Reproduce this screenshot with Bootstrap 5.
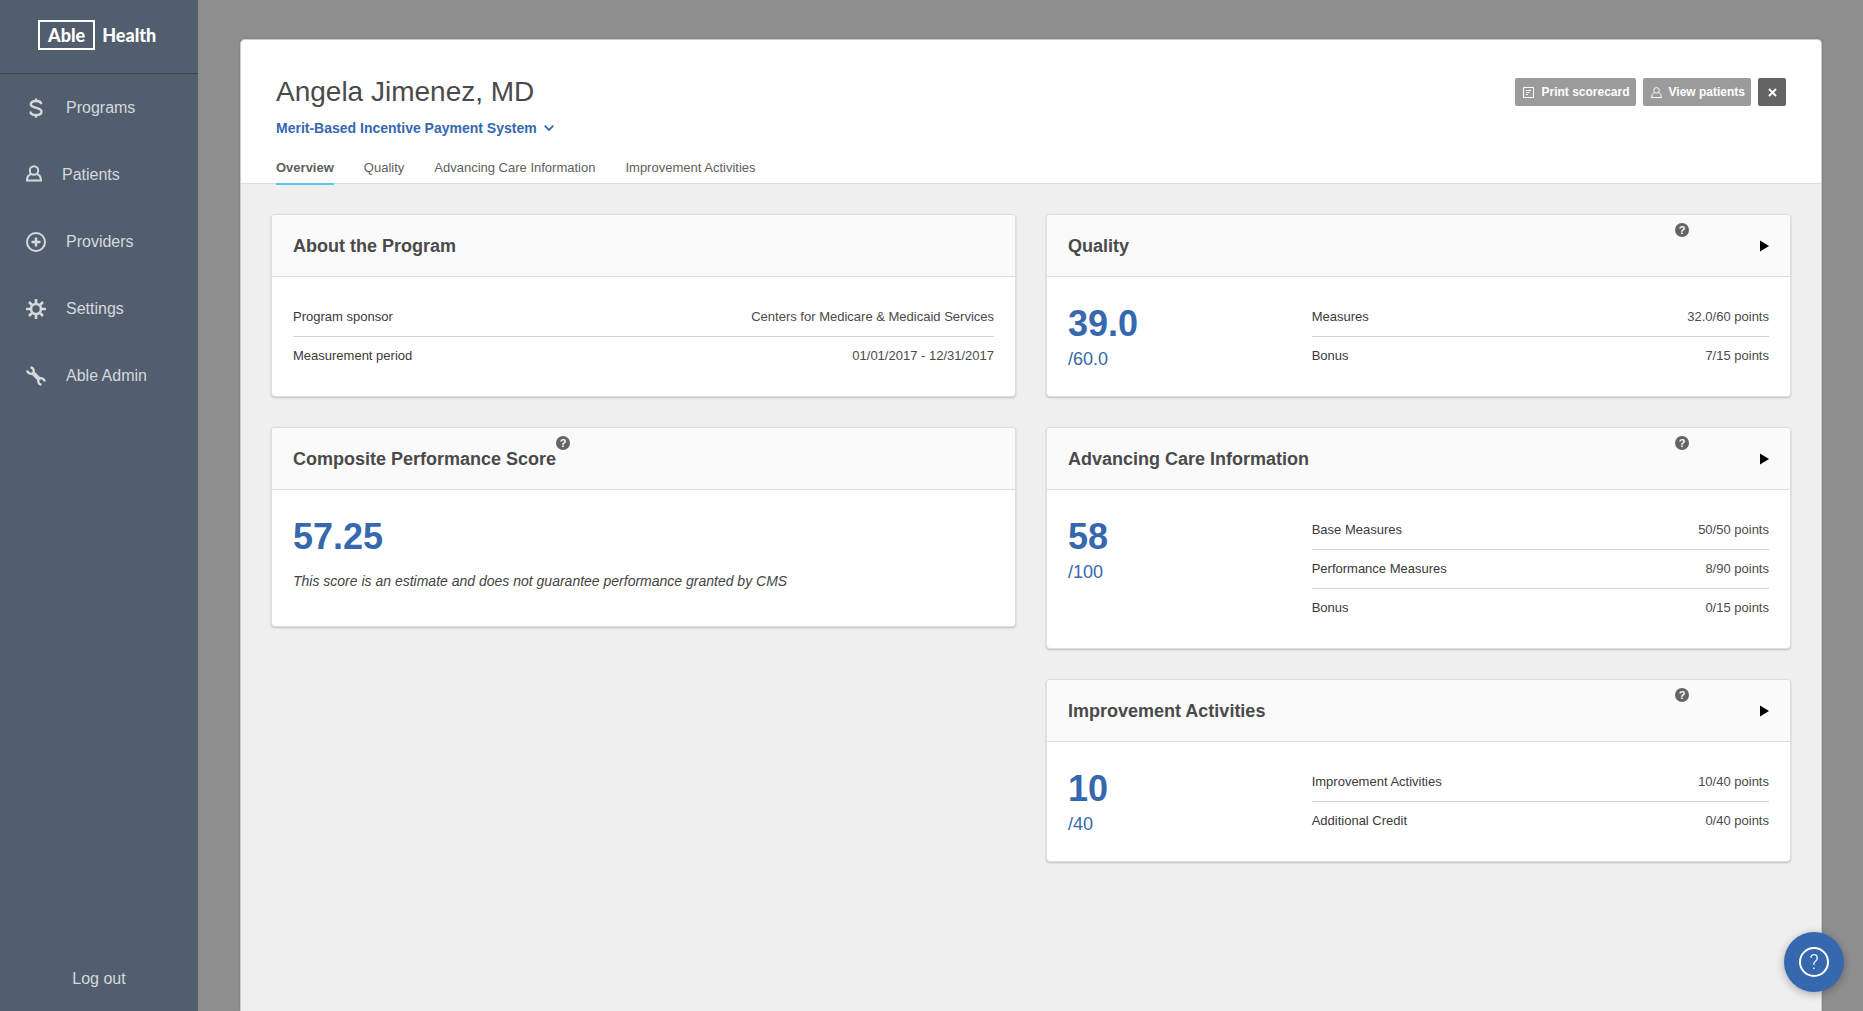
<!DOCTYPE html>
<html lang="en">
<head>
<meta charset="utf-8">
<meta name="viewport" content="width=device-width, initial-scale=1">
<title>Able Health - Provider scorecard</title>
<link href="https://cdn.jsdelivr.net/npm/bootstrap@5.3.0/dist/css/bootstrap.min.css" rel="stylesheet">
<style>
body { font-family: "Liberation Sans", Arial, sans-serif; font-size: 13px; line-height: 20px; color: #4a4a4a; background: #8e8e8e; }
button { font-family: inherit; }
svg { flex: none; display: block; }

.side-rail { width: 198px; background: #525e6e; flex: none; }
.brand-bar { height: 74px; padding: 0 38px 4px; border-bottom: 1px solid #3b4550; }
.brand-link { font: 900 18px/20px Lato, "Open Sans", sans-serif; color: #fff; gap: 7px; }
.brand-box { border: 2px solid #fff; padding: 3px 8px; }
.side-rail .nav-link { height: 67px; padding: 0 26px; gap: 20px; font-size: 16px; color: #d5d9de; }
.side-rail .nav-link:hover { color: #fff; }
.log-out { font-size: 16px; line-height: 24px; color: #d5d9de; padding-bottom: 20px; }

.page-area { padding: 39px 41px 0 42px; min-width: 0; }
.sheet { background: #efefef; border: 1px solid #ccc; border-bottom: 0; border-radius: 5px 5px 0 0; box-shadow: 0 0 2px rgba(0,0,0,.2); }
.sheet-head { background: #fff; border-bottom: 1px solid #ddd; border-radius: 4px 4px 0 0; padding: 34px 35px 0; }
.sheet-head h1 { font-size: 28px; line-height: 36px; margin: 0 0 8px; }
.program-pick { font-size: 14px; line-height: 20px; font-weight: 700; color: #3568ae; background: none; border: 0; padding: 0; gap: 7px; }
.sheet-tabs { gap: 30px; margin: 20px 0 -2px; }
.sheet-tabs .nav-link { padding: 0 0 5px; border-bottom: 2px solid transparent; color: #606060; }
.sheet-tabs .nav-link.active { font-weight: 700; border-color: #5bc5ea; }
.tool-row { gap: 7px; }
.tool-btn { height: 28px; padding: 0 6px 0 8px; gap: 7px; border: 0; border-radius: 2px; background: #9b9b9b; color: #fff; font-size: 12px; font-weight: 700; }
.tool-close { width: 28px; padding: 0; background: #646464; }

.sheet-body { padding: 30px; }
.sheet-body > .row { --bs-gutter-x: 30px; --bs-gutter-y: 30px; }
.stack { gap: 30px; }
.score-card { --bs-card-border-color: #ddd; --bs-card-border-radius: 4px; --bs-card-inner-border-radius: 3px; box-shadow: 0 1px 2px rgba(0,0,0,.2); color: inherit; }
.score-card .card-header { height: 62px; padding: 0 21px; background: #fafafa; border-color: #ddd; }
.score-card .card-body { padding: 21px 21px 20px; }
.score-card .card-body > .row { --bs-gutter-x: 30px; }
.score-card h2 { font-size: 18px; line-height: 24px; font-weight: 700; margin: 0; }
.help-dot { width: 14px; height: 14px; margin-top: 8px; padding: 0; border: 0; border-radius: 50%; background: #646464; color: #fafafa; font-size: 11px; line-height: 14px; font-weight: 700; text-align: center; }
.open-card { margin-left: 71px; padding: 0; border: 0; background: none; }
.big-score { font-size: 36px; line-height: 52px; font-weight: 700; color: #3568ae; }
.out-of { font-size: 18px; line-height: 18px; color: #3568ae; }
.estimate-note { font-size: 14px; line-height: 22px; font-style: italic; margin: 7px 0 14px; color: #444; }
.fact-list { margin: 0; }
.fact-list > div { height: 39px; border-bottom: 1px solid #d3d3d3; }
.fact-list > div:last-child { border-color: transparent; }
.fact-list dt { font-weight: 400; color: #3a3a3a; }
.fact-list dd { margin: 0; }

.help-fab { right: 19px; bottom: 19px; width: 60px; height: 60px; padding: 0; border: 0; border-radius: 50%; background: #3568ae; box-shadow: 0 2px 8px rgba(0,0,0,.3); }
.help-ring { width: 30px; height: 30px; border: 2px solid #fff; border-radius: 50%; color: #fff; font: 300 20px/26px Roboto, sans-serif; }
</style>
<script src="https://cdn.jsdelivr.net/npm/bootstrap@5.3.0/dist/js/bootstrap.bundle.min.js" defer></script>
</head>
<body>
<div class="d-flex min-vh-100">
  <aside class="side-rail d-flex flex-column">
    <div class="brand-bar d-flex align-items-center">
      <a class="brand-link d-flex align-items-center text-decoration-none" href="#"><span class="brand-box">Able</span><span>Health</span></a>
    </div>
    <nav class="nav flex-column" aria-label="Main">
      <a class="nav-link d-flex align-items-center" href="#">
        <svg width="20" height="20" viewBox="0 0 20 20" fill="none" stroke="currentColor" stroke-width="2.400"><path d="M15.200 6.200C15.200 4 13 3 10 3S4.800 4 4.800 6.300C4.800 11 15.500 8.600 15.500 13.500C15.500 16 13 17 10 17S4.500 16 4.500 13.400M10 .4V3.500M10 16.500V19.700"/></svg>Programs</a>
      <a class="nav-link d-flex align-items-center" href="#">
        <svg width="16" height="20" viewBox="0 0 16 20" fill="none" stroke="currentColor" stroke-width="2"><circle cx="8" cy="5.500" r="4.200"/><path d="M5 9C2.500 10 1 12 1 15.500H15C15 12 13.500 10 11 9"/></svg>Patients</a>
      <a class="nav-link d-flex align-items-center" href="#">
        <svg width="20" height="20" viewBox="0 0 20 20" fill="none" stroke="currentColor" stroke-width="2"><circle cx="10" cy="10" r="9"/><path d="M10 5.500V14.500M5.500 10H14.500" stroke-width="2.400"/></svg>Providers</a>
      <a class="nav-link d-flex align-items-center" href="#">
        <svg width="20" height="20" viewBox="0 0 20 20" fill="none" stroke="currentColor" stroke-width="2.600"><circle cx="10" cy="10" r="5"/><path d="M10 0V5M10 15V20M0 10H5M15 10H20M3 3L6.500 6.500M13.500 13.500L17 17M3 17L6.500 13.500M13.500 6.500L17 3"/></svg>Settings</a>
      <a class="nav-link d-flex align-items-center" href="#">
        <svg width="20" height="20" viewBox="0 0 20 20" fill="none" stroke="currentColor"><path d="M6.500 6.500L13.500 13.500" stroke-width="4"/><path d="M4.500 1.200C7.400 1.600 8.600 4.600 7.200 7.200C4.600 8.600 1.600 7.400 1.200 4.500M15.500 18.800C12.600 18.400 11.400 15.400 12.800 12.800C15.400 11.400 18.400 12.600 18.800 15.500" stroke-width="2.400"/></svg>Able Admin</a>
    </nav>
    <a class="log-out mt-auto text-center text-decoration-none" href="#">Log out</a>
  </aside>

  <main class="page-area flex-grow-1 d-flex flex-column">
    <div class="sheet flex-grow-1">
      <header class="sheet-head">
        <div class="d-flex justify-content-between align-items-start">
          <div>
            <h1>Angela Jimenez, MD</h1>
            <button class="program-pick d-flex align-items-center" type="button">Merit-Based Incentive Payment System
              <svg width="10" height="6" viewBox="0 0 10 6" fill="none" stroke="currentColor" stroke-width="1.800"><path d="M.7.700L5 5L9.300.7"/></svg></button>
          </div>
          <div class="tool-row d-flex mt-1">
            <button class="tool-btn d-flex align-items-center" type="button">
              <svg width="11" height="11" viewBox="0 0 11 11" fill="none" stroke="currentColor"><path d="M.5.500H10.500V10.500H.5ZM3 3.500H8M3 5.500H6.500M3 7.500H5"/></svg>Print scorecard</button>
            <button class="tool-btn d-flex align-items-center" type="button">
              <svg width="11" height="11" viewBox="0 0 11 11" fill="none" stroke="currentColor"><circle cx="5.500" cy="3.400" r="2.800"/><path d="M3.400 5.600C1.500 6.400.6 8 .6 10.500H10.400C10.400 8 9.500 6.400 7.600 5.600"/></svg>View patients</button>
            <button class="tool-btn tool-close d-flex align-items-center justify-content-center" type="button" aria-label="Close">
              <svg width="9" height="9" viewBox="0 0 9 9" fill="none" stroke="currentColor" stroke-width="2"><path d="M1 1L8 8M8 1L1 8"/></svg></button>
          </div>
        </div>
        <nav class="sheet-tabs nav" aria-label="Scorecard sections">
          <a class="nav-link active" aria-current="page" href="#">Overview</a>
          <a class="nav-link" href="#">Quality</a>
          <a class="nav-link" href="#">Advancing Care Information</a>
          <a class="nav-link" href="#">Improvement Activities</a>
        </nav>
      </header>

      <div class="sheet-body">
        <div class="row">
          <div class="col-12 col-lg-6">
            <div class="stack d-flex flex-column">
              <section class="score-card card">
                <div class="card-header d-flex align-items-center"><h2>About the Program</h2></div>
                <div class="card-body">
                  <dl class="fact-list">
                    <div class="d-flex justify-content-between align-items-center"><dt>Program sponsor</dt><dd>Centers for Medicare &amp; Medicaid Services</dd></div>
                    <div class="d-flex justify-content-between align-items-center"><dt>Measurement period</dt><dd>01/01/2017 - 12/31/2017</dd></div>
                  </dl>
                </div>
              </section>
              <section class="score-card card">
                <div class="card-header d-flex align-items-center"><h2>Composite Performance Score</h2><button class="help-dot align-self-start" type="button">?</button></div>
                <div class="card-body">
                  <div class="big-score">57.25</div>
                  <p class="estimate-note">This score is an estimate and does not guarantee performance granted by CMS</p>
                </div>
              </section>
            </div>
          </div>

          <div class="col-12 col-lg-6">
            <div class="stack d-flex flex-column">
              <section class="score-card card">
                <div class="card-header d-flex align-items-center"><h2 class="flex-grow-1">Quality</h2><button class="help-dot align-self-start" type="button">?</button>
                  <button class="open-card" type="button" aria-label="Open Quality"><svg width="9" height="12" viewBox="0 0 9 12"><path d="M0 .5L9 6L0 11.500Z"/></svg></button></div>
                <div class="card-body">
                  <div class="row">
                    <div class="col-4"><div class="big-score">39.0</div><div class="out-of">/60.0</div></div>
                    <div class="col-8">
                      <dl class="fact-list">
                        <div class="d-flex justify-content-between align-items-center"><dt>Measures</dt><dd>32.0/60 points</dd></div>
                        <div class="d-flex justify-content-between align-items-center"><dt>Bonus</dt><dd>7/15 points</dd></div>
                      </dl>
                    </div>
                  </div>
                </div>
              </section>
              <section class="score-card card">
                <div class="card-header d-flex align-items-center"><h2 class="flex-grow-1">Advancing Care Information</h2><button class="help-dot align-self-start" type="button">?</button>
                  <button class="open-card" type="button" aria-label="Open Advancing Care Information"><svg width="9" height="12" viewBox="0 0 9 12"><path d="M0 .5L9 6L0 11.500Z"/></svg></button></div>
                <div class="card-body">
                  <div class="row">
                    <div class="col-4"><div class="big-score">58</div><div class="out-of">/100</div></div>
                    <div class="col-8">
                      <dl class="fact-list">
                        <div class="d-flex justify-content-between align-items-center"><dt>Base Measures</dt><dd>50/50 points</dd></div>
                        <div class="d-flex justify-content-between align-items-center"><dt>Performance Measures</dt><dd>8/90 points</dd></div>
                        <div class="d-flex justify-content-between align-items-center"><dt>Bonus</dt><dd>0/15 points</dd></div>
                      </dl>
                    </div>
                  </div>
                </div>
              </section>
              <section class="score-card card">
                <div class="card-header d-flex align-items-center"><h2 class="flex-grow-1">Improvement Activities</h2><button class="help-dot align-self-start" type="button">?</button>
                  <button class="open-card" type="button" aria-label="Open Improvement Activities"><svg width="9" height="12" viewBox="0 0 9 12"><path d="M0 .5L9 6L0 11.500Z"/></svg></button></div>
                <div class="card-body">
                  <div class="row">
                    <div class="col-4"><div class="big-score">10</div><div class="out-of">/40</div></div>
                    <div class="col-8">
                      <dl class="fact-list">
                        <div class="d-flex justify-content-between align-items-center"><dt>Improvement Activities</dt><dd>10/40 points</dd></div>
                        <div class="d-flex justify-content-between align-items-center"><dt>Additional Credit</dt><dd>0/40 points</dd></div>
                      </dl>
                    </div>
                  </div>
                </div>
              </section>
            </div>
          </div>
        </div>
      </div>
    </div>
  </main>
</div>
<button class="help-fab position-fixed d-flex align-items-center justify-content-center" type="button"><span class="help-ring">?</span></button>
</body>
</html>
